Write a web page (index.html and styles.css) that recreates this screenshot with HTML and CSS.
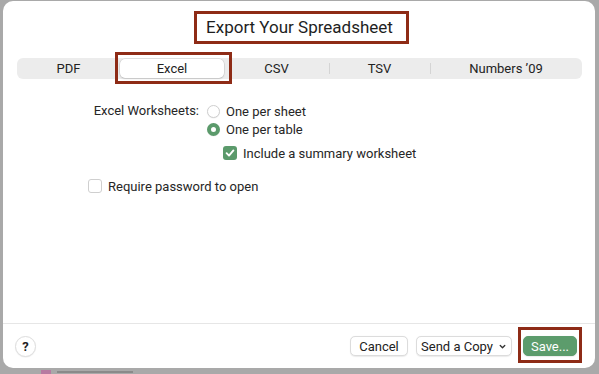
FILE: index.html
```html
<!DOCTYPE html>
<html>
<head>
<meta charset="utf-8">
<link rel="stylesheet" href="styles.css">
</head>
<body>
<div class="screen">
  <div class="dialog">
    <header class="title-row">
      <h1 class="title">Export Your Spreadsheet</h1>
    </header>
    <nav class="tabs">
      <span class="tab">PDF</span>
      <span class="tab selected">Excel</span>
      <span class="tab">CSV</span>
      <span class="tab div-left">TSV</span>
      <span class="tab div-left">Numbers ’09</span>
    </nav>
    <section class="options">
      <div class="ws-row">
        <span class="label">Excel Worksheets:</span>
        <div class="choices">
          <label class="choice"><span class="radio"></span>One per sheet</label>
          <label class="choice"><span class="radio on"></span>One per table</label>
          <label class="choice sub"><span class="check on"><svg viewBox="0 0 14 14" width="14" height="14"><path d="M3.6 7.2 L6 9.6 L10.4 4.4" fill="none" stroke="#fff" stroke-width="1.9" stroke-linecap="round" stroke-linejoin="round"/></svg></span>Include a summary worksheet</label>
        </div>
      </div>
      <label class="choice pw"><span class="check"></span>Require password to open</label>
    </section>
    <footer class="footer">
      <button class="help">?</button>
      <div class="actions">
        <button class="btn cancel">Cancel</button>
        <button class="btn send">Send a Copy <svg class="chev" viewBox="0 0 10 10" width="9" height="9"><path d="M2.5 3.8 L5 6.3 L7.5 3.8" fill="none" stroke="#333" stroke-width="1.5" stroke-linecap="round" stroke-linejoin="round"/></svg></button>
        <button class="btn save">Save...</button>
      </div>
    </footer>
  </div>
  <div class="behind">
    <span class="swatch"></span><span class="bar"></span>
  </div>
</div>
</body>
</html>
```

FILE: styles.css
```css
* { box-sizing: border-box; }
html, body { margin: 0; padding: 0; }
body {
  width: 599px;
  height: 374px;
  overflow: hidden;
  background: #a9a9a9;
  font-family: "Roboto", "Liberation Sans", sans-serif;
  color: #262626;
}
.screen {
  display: flex;
  flex-direction: column;
  padding: 1px 4px 0 3px;
}
.dialog {
  height: 367px;
  background: #fff;
  border-radius: 10px;
  display: flex;
  flex-direction: column;
}
.title-row {
  display: flex;
  justify-content: center;
  padding-top: 10px;
  padding-left: 5px;
}
.title {
  margin: 0;
  font-size: 17px;
  font-weight: 400;
  height: 33px;
  line-height: 27px;
  padding: 0 13px 0 9px;
  border: 3px solid #8e2b16;
  color: #1e1e1e;
}
.tabs {
  margin: 14px 13px 0 14px;
  height: 21px;
  background: #ececec;
  border-radius: 6px;
  display: grid;
  grid-template-columns: 103px 104px 105px 101px 1fr;
  align-items: center;
  font-size: 13px;
  color: #222;
}
.tab {
  text-align: center;
  height: 21px;
  line-height: 21px;
  position: relative;
}
.tab.div-left::before {
  content: "";
  position: absolute;
  left: 0;
  top: 5px;
  height: 11px;
  width: 1px;
  background: #d4d4d4;
}
.tab.selected {
  background: #fff;
  border-radius: 5px;
  height: 19px;
  line-height: 19px;
  box-shadow: 0 0 0 0.5px rgba(0,0,0,0.12), 0 1px 2px rgba(0,0,0,0.12);
}
.tab.selected::after {
  content: "";
  position: absolute;
  left: -5px;
  right: -8px;
  top: -7px;
  bottom: -6px;
  border: 3px solid #8e2b16;
}
.options {
  display: flex;
  flex-direction: column;
  font-size: 13px;
  padding-top: 23px;
  flex: 1;
}
.ws-row {
  display: grid;
  grid-template-columns: 196px auto;
  column-gap: 8px;
}
.label {
  text-align: right;
  line-height: 18px;
}
.choices {
  display: flex;
  flex-direction: column;
}
.choice {
  display: flex;
  align-items: center;
  gap: 6px;
  height: 18px;
}
.choice.sub {
  margin-left: 16px;
  margin-top: 6px;
}
.choice.pw {
  margin-left: 85px;
  margin-top: 15px;
}
.radio {
  width: 13px;
  height: 13px;
  border-radius: 50%;
  border: 1px solid #cfcfcf;
  background: #fff;
  box-shadow: 0 0.5px 1px rgba(0,0,0,0.08);
}
.radio.on {
  border: 4px solid #5b9a6b;
  background: #fff;
}
.check {
  width: 14px;
  height: 14px;
  border-radius: 3px;
  border: 1px solid #cfcfcf;
  background: #fff;
  display: flex;
}
.check.on {
  border: none;
  background: #5b9a6b;
}
.footer {
  border-top: 1px solid #e6e6e6;
  height: 45px;
  display: flex;
  align-items: center;
  justify-content: space-between;
  padding: 0 18px 0 12px;
}
button {
  font-family: inherit;
  margin: 0;
}
.help {
  width: 21px;
  height: 21px;
  border-radius: 50%;
  border: 1px solid #dedede;
  background: #fff;
  font-size: 13px;
  font-weight: 700;
  padding: 0;
  color: #222;
  box-shadow: 0 0.5px 1px rgba(0,0,0,0.08);
}
.actions {
  display: flex;
  align-items: center;
}
.btn {
  height: 20px;
  border-radius: 5px;
  border: 1px solid #dcdcdc;
  background: #fff;
  font-size: 13px;
  color: #222;
  padding: 0;
  display: flex;
  align-items: center;
  justify-content: center;
  box-shadow: 0 0.5px 1px rgba(0,0,0,0.08);
}
.btn.cancel { width: 58px; }
.btn.send { width: 96px; gap: 5px; margin-left: 8px; }
.chev { margin-top: 1px; }
.btn.save {
  width: 54px;
  margin-left: 11px;
  background: #5c9c6c;
  border-color: #5c9c6c;
  color: #fff;
  position: relative;
}
.btn.save::after {
  content: "";
  position: absolute;
  left: -6px;
  right: -6px;
  top: -10px;
  bottom: -8px;
  border: 3px solid #8e2b16;
}
.behind {
  height: 6px;
  overflow: hidden;
  display: flex;
  align-items: flex-start;
  gap: 6px;
  padding-left: 38px;
}
.swatch {
  width: 10px;
  height: 10px;
  background: #b77ba1;
  margin-top: 2px;
}
.bar {
  width: 76px;
  height: 2px;
  margin-top: 3px;
  background: #8a8a8a;
}
```
